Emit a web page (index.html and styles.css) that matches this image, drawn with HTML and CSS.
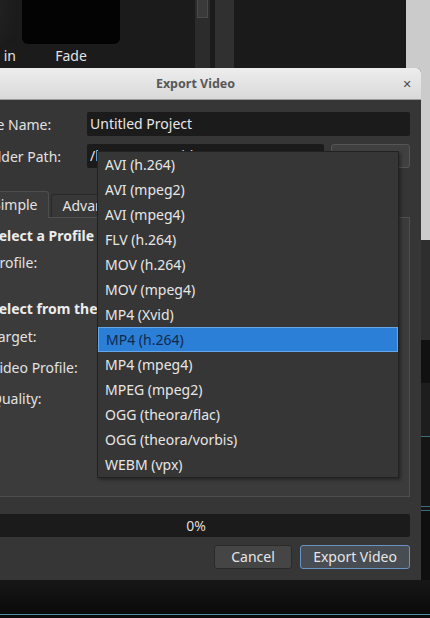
FILE: index.html
```html
<!DOCTYPE html>
<html>
<head>
<meta charset="utf-8">
<link rel="stylesheet" href="styles.css">
</head>
<body>
<div class="desktop">
  <div class="upper">
    <div class="main-col">
      <div class="top-strip">
        <div class="thumbs">
          <div class="thumb-cell first">
            <div class="thumb grey"></div>
            <div class="caption right">Fade in</div>
          </div>
          <div class="thumb-cell">
            <div class="thumb black"></div>
            <div class="caption">Fade</div>
          </div>
        </div>
        <div class="scrollbar"><div class="scroll-thumb"></div></div>
        <div class="gap-dark"></div>
        <div class="pane-grey"></div>
        <div class="pane-black"></div>
      </div>
      <div class="main-rest"></div>
    </div>
    <div class="right-col">
      <div class="rc light"></div>
      <div class="rc mid"></div>
      <div class="rc black1"></div>
      <div class="rc dark1"></div>
      <div class="rc line"></div>
      <div class="rc dark2"></div>
      <div class="rc line"></div>
      <div class="rc dark3"></div>
      <div class="rc line"></div>
      <div class="rc dark4"></div>
    </div>
  </div>
  <div class="bottom-strip">
    <div class="bs-fill"></div>
    <div class="bs-line"></div>
    <div class="bs-end"></div>
  </div>
</div>

<div class="dialog">
  <div class="titlebar">
    <span class="tb-side"></span>
    <span class="tb-title">Export Video</span>
    <span class="tb-side close">&#x2715;</span>
  </div>
  <div class="dlg-body">
    <div class="row">
      <span class="label">File Name:</span>
      <div class="input">Untitled Project</div>
    </div>
    <div class="row second">
      <span class="label">Folder Path:</span>
      <div class="input short">/home/user/Videos</div>
      <div class="btn browse">Browse</div>
    </div>
    <div class="tabbar">
      <div class="tab active">Simple</div>
      <div class="tab">Advanced</div>
    </div>
    <div class="panel">
      <div class="heading">Select a Profile</div>
      <div class="plabel l-profile">Profile:</div>
      <div class="heading h2">Select from the following options</div>
      <div class="plabel l-target">Target:</div>
      <div class="plabel l-video">Video Profile:</div>
      <div class="plabel l-quality">Quality:</div>
    </div>
    <div class="progress">0%</div>
    <div class="buttons">
      <div class="btn cancel">Cancel</div>
      <div class="btn export">Export Video</div>
    </div>
  </div>
</div>

<div class="popup">
  <div class="item">AVI (h.264)</div>
  <div class="item">AVI (mpeg2)</div>
  <div class="item">AVI (mpeg4)</div>
  <div class="item">FLV (h.264)</div>
  <div class="item">MOV (h.264)</div>
  <div class="item">MOV (mpeg4)</div>
  <div class="item">MP4 (Xvid)</div>
  <div class="item selected">MP4 (h.264)</div>
  <div class="item">MP4 (mpeg4)</div>
  <div class="item">MPEG (mpeg2)</div>
  <div class="item">OGG (theora/flac)</div>
  <div class="item">OGG (theora/vorbis)</div>
  <div class="item">WEBM (vpx)</div>
</div>
</body>
</html>
```

FILE: styles.css
```css
html, body {
  margin: 0;
  padding: 0;
  width: 430px;
  height: 618px;
  overflow: hidden;
  background: #1b1b1b;
  font-family: "Noto Sans", "DejaVu Sans", sans-serif;
  font-size: 14px;
}

.desktop {
  width: 430px;
  height: 618px;
  display: flex;
  flex-direction: column;
}

.upper {
  height: 580px;
  display: flex;
}

.main-col {
  width: 406px;
  display: flex;
  flex-direction: column;
}

.top-strip {
  height: 68px;
  display: flex;
  background: #1b1b1b;
}

.thumbs {
  width: 195px;
  display: flex;
  gap: 5px;
}

.thumb-cell {
  width: 98px;
  display: flex;
  flex-direction: column;
  flex-shrink: 0;
}

.thumb-cell.first {
  margin-left: -81px;
}

.thumb {
  height: 44px;
  border-radius: 0 0 6px 6px;
}

.thumb.grey {
  background: radial-gradient(circle at 30% 20%, #333 0%, #222 60%, #181818 100%);
}

.thumb.black {
  background: #030303;
}

.caption {
  color: #e2e2e2;
  text-align: center;
  margin-top: 2px;
  line-height: 20px;
}

.caption.right {
  text-align: right;
  padding-right: 1px;
}

.scrollbar {
  width: 15px;
  background: #2c2c2c;
  padding: 0 2px;
  box-sizing: border-box;
}

.scroll-thumb {
  height: 18px;
  background: #3a3a3a;
  border: 1px solid #4a4a4a;
  border-top: none;
  box-sizing: border-box;
}

.gap-dark {
  width: 5px;
  background: #1b1b1b;
}

.pane-grey {
  width: 19px;
  background: #303030;
}

.pane-black {
  flex: 1;
  background: #1a1a1a;
}

.main-rest {
  flex: 1;
  background: #1a1a1a;
}

.right-col {
  width: 24px;
  display: flex;
  flex-direction: column;
}

.rc.light { height: 240px; background: #cbcbcb; }
.rc.mid { height: 100px; background: #2e2e2e; }
.rc.black1 { height: 43px; background: #111; }
.rc.dark1 { height: 53px; background: #1d1d1d; }
.rc.line { height: 1px; background: #3c6e7c; }
.rc.dark2 { height: 69px; background: #151515; }
.rc.dark3 { height: 3px; background: #151515; }
.rc.dark4 { flex: 1; background: #0f0f0f; }

.bottom-strip {
  height: 38px;
  display: flex;
  flex-direction: column;
}

.bs-fill {
  height: 34px;
  background: linear-gradient(#171717, #0a0a0a);
}

.bs-line {
  height: 1px;
  background: #4f8fa2;
}

.bs-end {
  flex: 1;
  background: #0c0c0c;
}

/* dialog */
.dialog {
  position: absolute;
  left: -30px;
  top: 68px;
  width: 451px;
  height: 512px;
  background: #363636;
  border-radius: 5px 5px 0 0;
  display: flex;
  flex-direction: column;
  box-sizing: border-box;
}

.titlebar {
  height: 33px;
  box-sizing: border-box;
  border-bottom: 1px solid #9c9c9c;
  border-radius: 5px 5px 0 0;
  background: linear-gradient(#ededed, #d9d9d9);
  display: flex;
  align-items: center;
}

.tb-side {
  width: 28px;
  text-align: center;
}

.tb-title {
  flex: 1;
  text-align: center;
  font-weight: bold;
  color: #585858;
  font-size: 12.5px;
}

.close {
  color: #4a4a4a;
  font-size: 11px;
  font-weight: bold;
}

.dlg-body {
  flex: 1;
  padding: 12px 11px 11px 12px;
  display: flex;
  flex-direction: column;
}

.row {
  height: 24px;
  display: flex;
  align-items: center;
}

.row.second {
  margin-top: 8px;
}

.label {
  width: 105px;
  color: #e2e2e2;
  flex-shrink: 0;
}

.input {
  flex: 1;
  height: 24px;
  line-height: 24px;
  background: #1b1b1b;
  border-radius: 2px;
  color: #e8e8e8;
  padding-left: 3px;
  white-space: nowrap;
  overflow: hidden;
}

.input.short {
  flex: none;
  width: 234px;
}

.btn {
  box-sizing: border-box;
  height: 24px;
  line-height: 22px;
  text-align: center;
  border-radius: 3px;
  color: #e6e6e6;
}

.browse {
  margin-left: 7px;
  flex: 1;
  background: #404040;
  border: 1px solid #555;
}

.tabbar {
  margin-top: 23px;
  height: 26px;
  display: flex;
  align-items: flex-end;
  gap: 2px;
  position: relative;
  z-index: 1;
}

.tab {
  height: 23px;
  line-height: 22px;
  box-sizing: border-box;
  padding: 0 11px;
  color: #e2e2e2;
  background: #383838;
  border: 1px solid #292929;
  border-bottom: none;
  border-radius: 3px 3px 0 0;
}

.tab.active {
  height: 27px;
  line-height: 26px;
  padding: 0 10px;
  margin-bottom: -1px;
  background: #3b3b3b;
  border-color: #4e4e4e;
}

.panel {
  height: 280px;
  box-sizing: border-box;
  border: 1px solid #4e4e4e;
  background: #3b3b3b;
  padding: 8px 8px;
  display: flex;
  flex-direction: column;
}

.heading {
  font-weight: bold;
  color: #ececec;
  line-height: 20px;
  white-space: nowrap;
}

.plabel {
  color: #e2e2e2;
  line-height: 20px;
}

.l-profile { margin-top: 7px; }
.heading.h2 { margin-top: 26px; }
.l-target { margin-top: 8px; }
.l-video { margin-top: 11px; }
.l-quality { margin-top: 11px; }

.progress {
  margin-top: 17px;
  height: 23px;
  line-height: 23px;
  background: #1b1b1b;
  border-radius: 2px;
  text-align: center;
  color: #dedede;
}

.buttons {
  margin-top: 8px;
  display: flex;
  justify-content: flex-end;
  gap: 8px;
}

.cancel {
  width: 78px;
  background: #454545;
  border: 1px solid #2a2a2a;
}

.export {
  width: 110px;
  background: #484d53;
  border: 1px solid #6b93c2;
}

/* dropdown popup */
.popup {
  position: absolute;
  z-index: 10;
  left: 97px;
  top: 151px;
  width: 302px;
  box-sizing: border-box;
  background: #363636;
  border: 1px solid #222;
  box-shadow: 2px 2px 3px rgba(0,0,0,0.35);
  display: flex;
  flex-direction: column;
}

.item {
  height: 25px;
  line-height: 25px;
  padding-left: 7px;
  color: #e6e6e6;
  white-space: nowrap;
}

.item.selected {
  box-sizing: border-box;
  line-height: 23px;
  background: #2b7fd6;
  border: 1px solid #64a6e8;
  color: #10294a;
}
```
